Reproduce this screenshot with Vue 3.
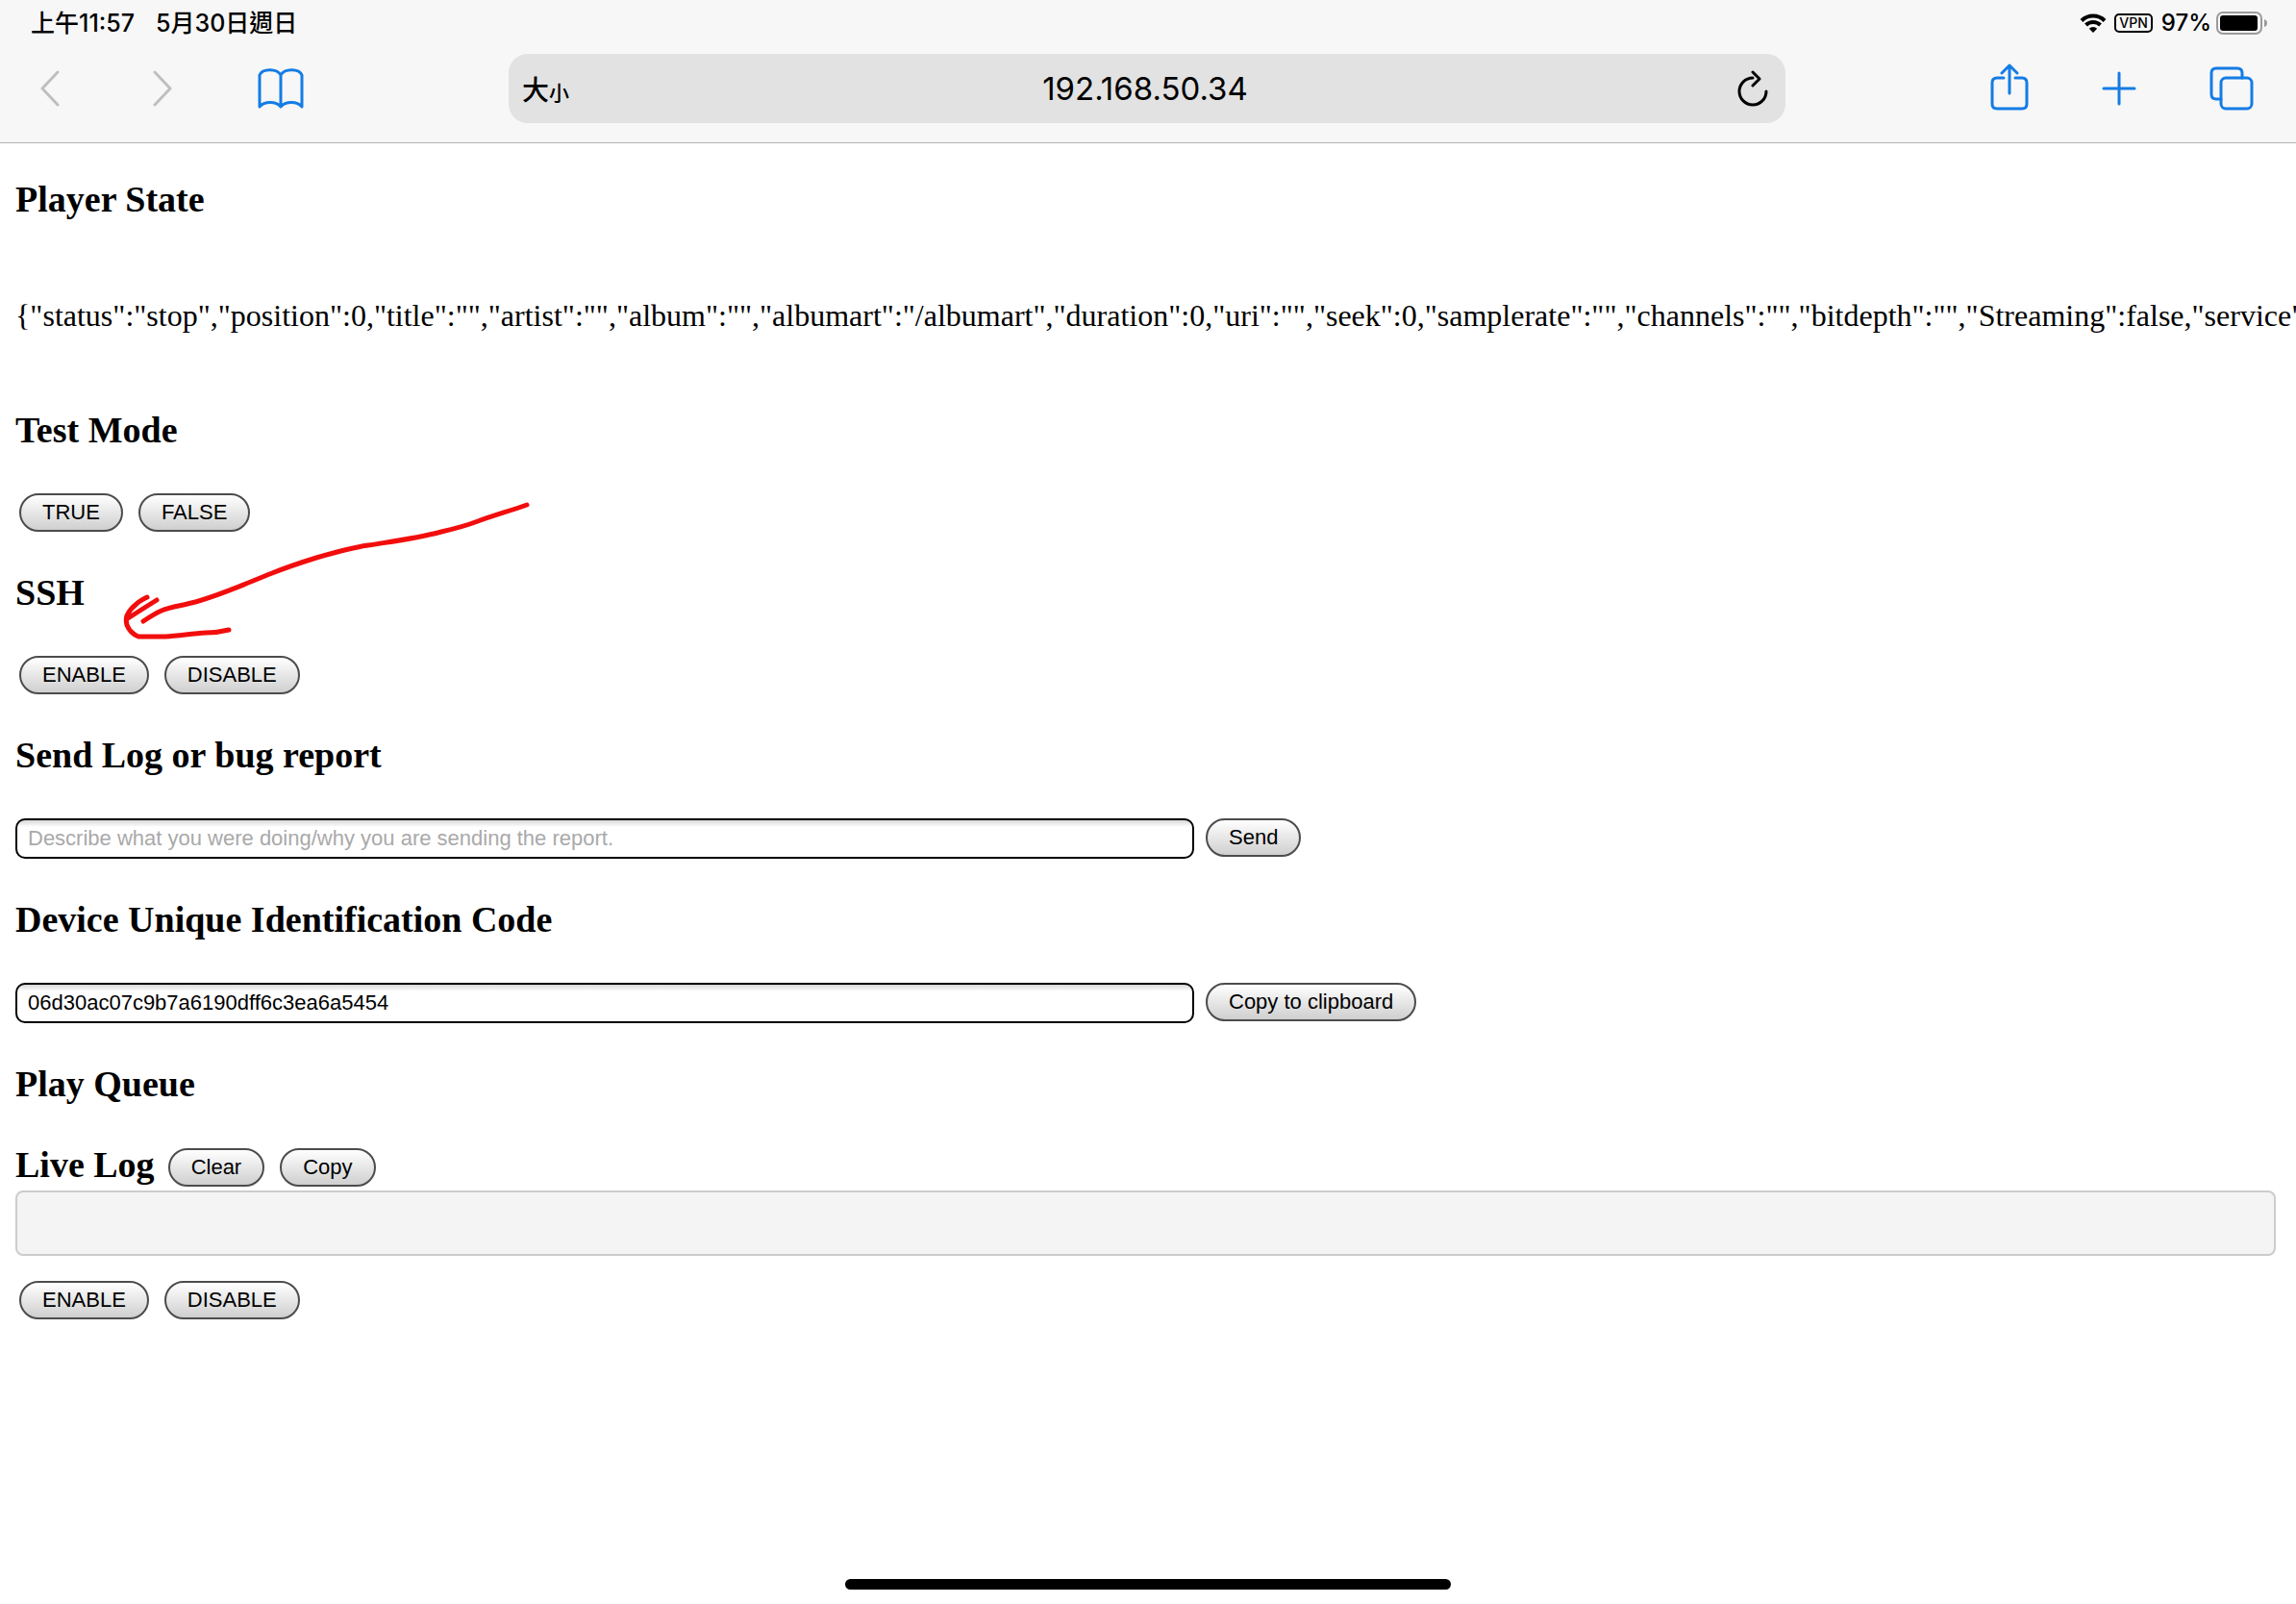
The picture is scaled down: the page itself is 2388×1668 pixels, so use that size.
<script setup>
import { ref } from 'vue'

const playerState = '{"status":"stop","position":0,"title":"","artist":"","album":"","albumart":"/albumart","duration":0,"uri":"","seek":0,"samplerate":"","channels":"","bitdepth":"","Streaming":false,"service"'
const report = ref('')
const deviceId = ref('06d30ac07c9b7a6190dff6c3ea6a5454')
</script>

<template>
  <div class="screen">
    <header class="chrome">
      <div class="status">
        <div class="clock"><span>上午11:57</span><span>5月30日週日</span></div>
        <div class="indicators">
          <svg class="wifi" viewBox="0 0 28 20" width="28" height="20" aria-hidden="true">
            <path d="M2 7.500A17 17 0 0 1 26 7.500M6.500 12A10.800 10.800 0 0 1 21.500 12" fill="none" stroke="#000" stroke-width="4" />
            <path d="M14 20L9.800 15.700A6 6 0 0 1 18.200 15.700Z" />
          </svg>
          <span class="vpn">VPN</span>
          <span class="percent">97%</span>
          <svg class="battery" viewBox="0 0 54 24" width="54" height="24" aria-hidden="true">
            <rect x="1" y="1" width="46" height="22" rx="6" fill="none" stroke="#9b9b9b" stroke-width="2" />
            <rect x="4" y="4" width="39" height="16" rx="3" />
            <path d="M50 8Q53 9 53 12T50 16Z" fill="#9b9b9b" />
          </svg>
        </div>
      </div>
      <nav class="toolbar">
        <div class="side">
          <button class="icon" aria-label="Back" disabled>
            <svg viewBox="0 0 26 40" width="26" height="40"><path d="M18 3L2 20L18 37" stroke="#bfbfbf" /></svg>
          </button>
          <button class="icon" aria-label="Forward" disabled>
            <svg viewBox="0 0 22 40" width="22" height="40"><path d="M4 3L20 20L4 37" stroke="#bfbfbf" /></svg>
          </button>
          <button class="icon" aria-label="Bookmarks">
            <svg viewBox="0 0 48 42" width="48" height="42">
              <path d="M24 40V7C20 0 5 0 2 7V40C7 34 19 34 24 40C29 34 41 34 46 40V7C43 0 28 0 24 7" />
            </svg>
          </button>
        </div>
        <div class="address">
          <button class="text-size" aria-label="Page settings"><span>大</span><small>小</small></button>
          <span class="host">192.168.50.34</span>
          <button class="icon reload" aria-label="Reload">
            <svg viewBox="0 0 32 38" width="32" height="38">
              <path d="M16 8A14 14 0 1 0 30 22M16 2L23 9L16 16" stroke="#000" />
            </svg>
          </button>
        </div>
        <div class="side end">
          <button class="icon" aria-label="Share">
            <svg viewBox="0 0 40 52" width="40" height="52">
              <path d="M14 15H7Q2 15 2 20V42Q2 47 7 47H33Q38 47 38 42V20Q38 15 33 15H26M20 31V2M12 10L20 2L28 10" />
            </svg>
          </button>
          <button class="icon" aria-label="New tab">
            <svg viewBox="0 0 36 36" width="36" height="36"><path d="M18 2V34M2 18H34" /></svg>
          </button>
          <button class="icon" aria-label="Tabs">
            <svg viewBox="0 0 46 46" width="46" height="46">
              <rect x="12" y="12" width="32" height="32" rx="5" />
              <path d="M12 34H7Q2 34 2 29V7Q2 2 7 2H29Q34 2 34 7V12" />
            </svg>
          </button>
        </div>
      </nav>
    </header>

    <main class="page">
      <section>
        <h3>Player State</h3>
        <pre class="state">{{ playerState }}</pre>
      </section>
      <section>
        <h3>Test Mode</h3>
        <div class="row inset"><button class="pill">TRUE</button><button class="pill">FALSE</button></div>
      </section>
      <section class="ssh">
        <h3>SSH</h3>
        <div class="row inset"><button class="pill">ENABLE</button><button class="pill">DISABLE</button></div>
        <svg class="arrow" viewBox="120 510 440 160" width="440" height="160" aria-hidden="true">
          <path d="M548 525C528 532 513 536 497 542C484 547 472 550 459 553C433 560 408 563 383 567C363 570 346 575 329 580C313 585 298 590 283 596C255 607 227 620 199 627C188 630 178 631 168 635C161 638 155 642 149 646" />
          <path d="M238 655C230 657 222 658 214 658C200 659 186 661 172 662C162 662 153 662 144 662C139 660 134 655 132 650C131 646 131 643 132 640C135 634 138 631 142 628C145 625 149 623 153 621M133 643Q147 634 163 624" />
        </svg>
      </section>
      <section>
        <h3><label for="report">Send Log or bug report</label></h3>
        <div class="row">
          <input id="report" v-model="report" type="text" placeholder="Describe what you were doing/why you are sending the report." />
          <button class="pill">Send</button>
        </div>
      </section>
      <section>
        <h3><label for="device">Device Unique Identification Code</label></h3>
        <div class="row">
          <input id="device" v-model="deviceId" type="text" />
          <button class="pill">Copy to clipboard</button>
        </div>
      </section>
      <section>
        <h3 class="queue">Play Queue</h3>
      </section>
      <section>
        <div class="log-head">
          <h3>Live Log</h3>
          <div class="log-actions"><button class="pill">Clear</button><button class="pill">Copy</button></div>
        </div>
        <pre class="log"></pre>
        <div class="row inset"><button class="pill">ENABLE</button><button class="pill">DISABLE</button></div>
      </section>
    </main>
    <div class="home"></div>
  </div>
</template>

<style>
body {
  margin: 0;
  background: #fff;
}
</style>

<style scoped>
.screen {
  position: relative;
  min-height: 100vh;
  overflow: hidden;
  color: #000;
  font-family: "Liberation Serif", "Times New Roman", serif;
}
button {
  margin: 0;
  color: #000;
}
.chrome {
  background: #f7f7f7;
  border-bottom: 1px solid #b2b2b2;
  font-family: Inter, "Noto Sans CJK TC", sans-serif;
}
.status {
  display: flex;
  justify-content: space-between;
  align-items: center;
  height: 47px;
  padding: 0 29px 0 32px;
  font-size: 24px;
  font-weight: 500;
}
.clock {
  display: flex;
  gap: 22px;
  font-size: 25px;
  line-height: 28px;
}
.indicators {
  display: flex;
  align-items: center;
}
.vpn {
  margin: 0 9px 0 8px;
  padding: 0 3px;
  border: 2px solid #000;
  border-radius: 5px;
  font-size: 14px;
  line-height: 16px;
}
.percent {
  margin-right: 5px;
}
.toolbar {
  display: flex;
  align-items: center;
  padding: 9px 42px 20px;
}
.side {
  display: flex;
  flex: 1;
  align-items: center;
  gap: 89px;
}
.side.end {
  box-sizing: border-box;
  justify-content: flex-end;
  gap: 76px;
  padding-right: 2px;
}
.icon {
  display: flex;
  padding: 0;
  border: 0;
  background: none;
}
.icon svg {
  fill: none;
  stroke: #147ce5;
  stroke-width: 3;
  stroke-linecap: round;
  stroke-linejoin: round;
}
.address {
  display: flex;
  flex: 0 0 1328px;
  align-items: center;
  justify-content: space-between;
  box-sizing: border-box;
  height: 72px;
  padding: 0 18px 0 14px;
  border-radius: 20px;
  background: #e2e2e2;
}
.text-size {
  display: flex;
  align-items: baseline;
  width: 64px;
  padding: 0;
  border: 0;
  background: none;
  font: 500 28px "Noto Sans CJK TC", sans-serif;
}
.text-size small {
  font-size: 21px;
}
.host {
  font-size: 33px;
}
.reload {
  width: 64px;
  justify-content: flex-end;
}
.page {
  padding: 37px 21px 0 16px;
}
section {
  margin-bottom: 42px;
}
h3 {
  margin: 0 0 45px;
  font-size: 38px;
  line-height: 42px;
}
.state {
  margin: 82px 0 80px;
  font: 32px/36px "Liberation Serif", "Times New Roman", serif;
}
.row {
  display: flex;
  align-items: flex-start;
  gap: 12px;
}
.row.inset {
  gap: 16px;
  padding-left: 4px;
}
.pill {
  height: 40px;
  padding: 0 22px;
  border: 2px solid #4c4c4c;
  border-radius: 20px;
  background: linear-gradient(#fff, #cfcfcf);
  font: 22px "Liberation Sans", Arial, sans-serif;
}
input {
  box-sizing: border-box;
  width: 1226px;
  height: 42px;
  padding: 0 11px;
  border: 2px solid #000;
  border-radius: 10px;
  background: linear-gradient(#d8d8d8, #fff 7px);
  color: #000;
  font: 22px "Liberation Sans", Arial, sans-serif;
}
input::placeholder {
  color: #a9a9a9;
}
.ssh {
  position: relative;
}
.arrow {
  position: absolute;
  top: -85px;
  left: 104px;
  fill: none;
  stroke: #f20d0d;
  stroke-width: 5;
  stroke-linecap: round;
  stroke-linejoin: round;
}
.queue {
  margin: 0;
}
.log-head {
  display: flex;
  align-items: flex-end;
  gap: 14px;
}
.log-head h3 {
  margin: 0 0 2px;
}
.log-actions {
  display: flex;
  gap: 16px;
}
.log {
  box-sizing: border-box;
  height: 68px;
  margin: 4px 0 26px;
  border: 2px solid #ccc;
  border-radius: 8px;
  background: #f4f4f4;
}
.home {
  position: absolute;
  bottom: 15px;
  left: 50%;
  width: 630px;
  height: 11px;
  margin-left: -315px;
  border-radius: 6px;
  background: #000;
}
</style>
